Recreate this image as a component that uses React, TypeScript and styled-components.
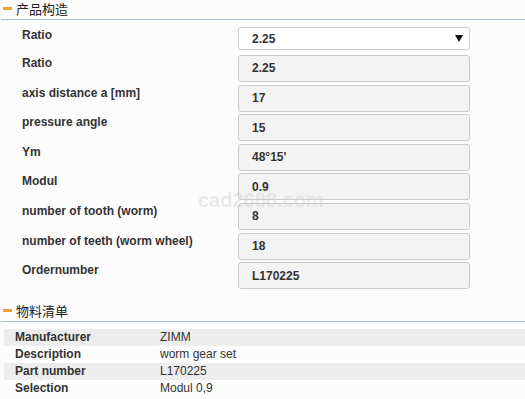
import { FC } from 'react';
import styled, { createGlobalStyle } from 'styled-components';

type Field = {
	label: string;
	value: string;
	select?: boolean;
};

const fields: Field[] = [
	{ label: 'Ratio', value: '2.25', select: true },
	{ label: 'Ratio', value: '2.25' },
	{ label: 'axis distance a [mm]', value: '17' },
	{ label: 'pressure angle', value: '15' },
	{ label: 'Ym', value: "48°15'" },
	{ label: 'Modul', value: '0.9' },
	{ label: 'number of tooth (worm)', value: '8' },
	{ label: 'number of teeth (worm wheel)', value: '18' },
	{ label: 'Ordernumber', value: 'L170225' },
];

const bom: [string, string][] = [
	['Manufacturer', 'ZIMM'],
	['Description', 'worm gear set'],
	['Part number', 'L170225'],
	['Selection', 'Modul 0,9'],
];

const GlobalStyle = createGlobalStyle`
	html, body {
		margin: 0;
		padding: 0;
		background: #fcfcfc;
	}
	body {
		font-family: 'Liberation Sans', Arial, sans-serif;
		color: #333;
	}
`;

const SectionTitle: FC<{ title: string }> = ({ title }) => (
	<TitleBar>
		<TitleMark />
		<TitleText>{title}</TitleText>
	</TitleBar>
);

const App: FC = () => {
	return (
		<Page>
			<GlobalStyle />
			<SectionTitle title="产品构造" />
			<Form>
				{fields.map((f, i) => (
					<FormRow key={i}>
						<Label>{f.label}</Label>
						{f.select ? (
							<Select>
								<span>{f.value}</span>
								<svg width="8" height="7" viewBox="0 0 8 7">
									<path d="M0 0 H8 L4 7 Z" fill="#111" />
								</svg>
							</Select>
						) : (
							<ReadOnlyInput>{f.value}</ReadOnlyInput>
						)}
					</FormRow>
				))}
			</Form>
			<SecondTitle>
				<SectionTitle title="物料清单" />
			</SecondTitle>
			<BomTable>
				<tbody>
					{bom.map(([k, v], i) => (
						<BomRow key={k} $striped={i % 2 === 0}>
							<BomKey>{k}</BomKey>
							<BomValue>{v}</BomValue>
						</BomRow>
					))}
				</tbody>
			</BomTable>
			<Watermark>cad2688.com</Watermark>
		</Page>
	);
};

const Page = styled.div`
	position: relative;
	width: 525px;
	height: 399px;
	overflow: hidden;
	background: #fcfcfc;
`;

const TitleBar = styled.div`
	display: flex;
	align-items: center;
	height: 19px;
	margin-left: 1px;
	padding-left: 2px;
	border-bottom: 1px solid #a3bfdb;
`;

const TitleMark = styled.div`
	width: 9px;
	height: 3px;
	background: #f0a22e;
	margin-right: 4px;
	margin-top: -2px;
`;

const TitleText = styled.div`
	font-family: 'Noto Sans CJK SC', sans-serif;
	font-size: 13px;
	line-height: 16px;
	color: #222;
	margin-top: -1px;
`;

const SecondTitle = styled.div`
	margin-top: 13px;
`;

const Form = styled.div`
	display: flex;
	flex-direction: column;
	gap: 2.6px;
	padding: 7px 0 0 22px;
`;

const FormRow = styled.div`
	display: grid;
	grid-template-columns: 216px 232px;
	align-items: start;
`;

const Label = styled.div`
	font-size: 12px;
	font-weight: bold;
	line-height: 14px;
	padding-top: 1px;
	color: #333;
`;

const fieldBase = `
	box-sizing: border-box;
	display: flex;
	align-items: center;
	border: 1px solid #cbcbcb;
	border-radius: 3px;
	padding-left: 13px;
	font-size: 12px;
	font-weight: bold;
	color: #333;
`;

const Select = styled.div`
	${fieldBase};
	height: 23px;
	margin-bottom: 2.4px;
	background: #fff;
	justify-content: space-between;
	padding-right: 6px;
	svg {
		display: block;
		margin-top: -1px;
	}
`;

const ReadOnlyInput = styled.div`
	${fieldBase};
	height: 27px;
	background: #f3f3f3;
`;

const BomTable = styled.table`
	margin: 7px 0 0 4px;
	width: 521px;
	border-collapse: collapse;
	font-size: 12px;
`;

const BomRow = styled.tr<{ $striped: boolean }>`
	height: 17px;
	background: ${(p) => (p.$striped ? '#ededed' : 'transparent')};
`;

const BomKey = styled.td`
	width: 145px;
	padding: 0 0 0 11px;
	font-weight: bold;
	line-height: 17px;
`;

const BomValue = styled.td`
	padding: 0;
	line-height: 17px;
`;

/* faint site watermark lying over the form */
const Watermark = styled.div`
	position: absolute;
	left: 198px;
	top: 193px;
	font-size: 20px;
	line-height: 14px;
	font-weight: bold;
	color: rgba(210, 210, 210, 0.45);
	pointer-events: none;
`;

export default App;
